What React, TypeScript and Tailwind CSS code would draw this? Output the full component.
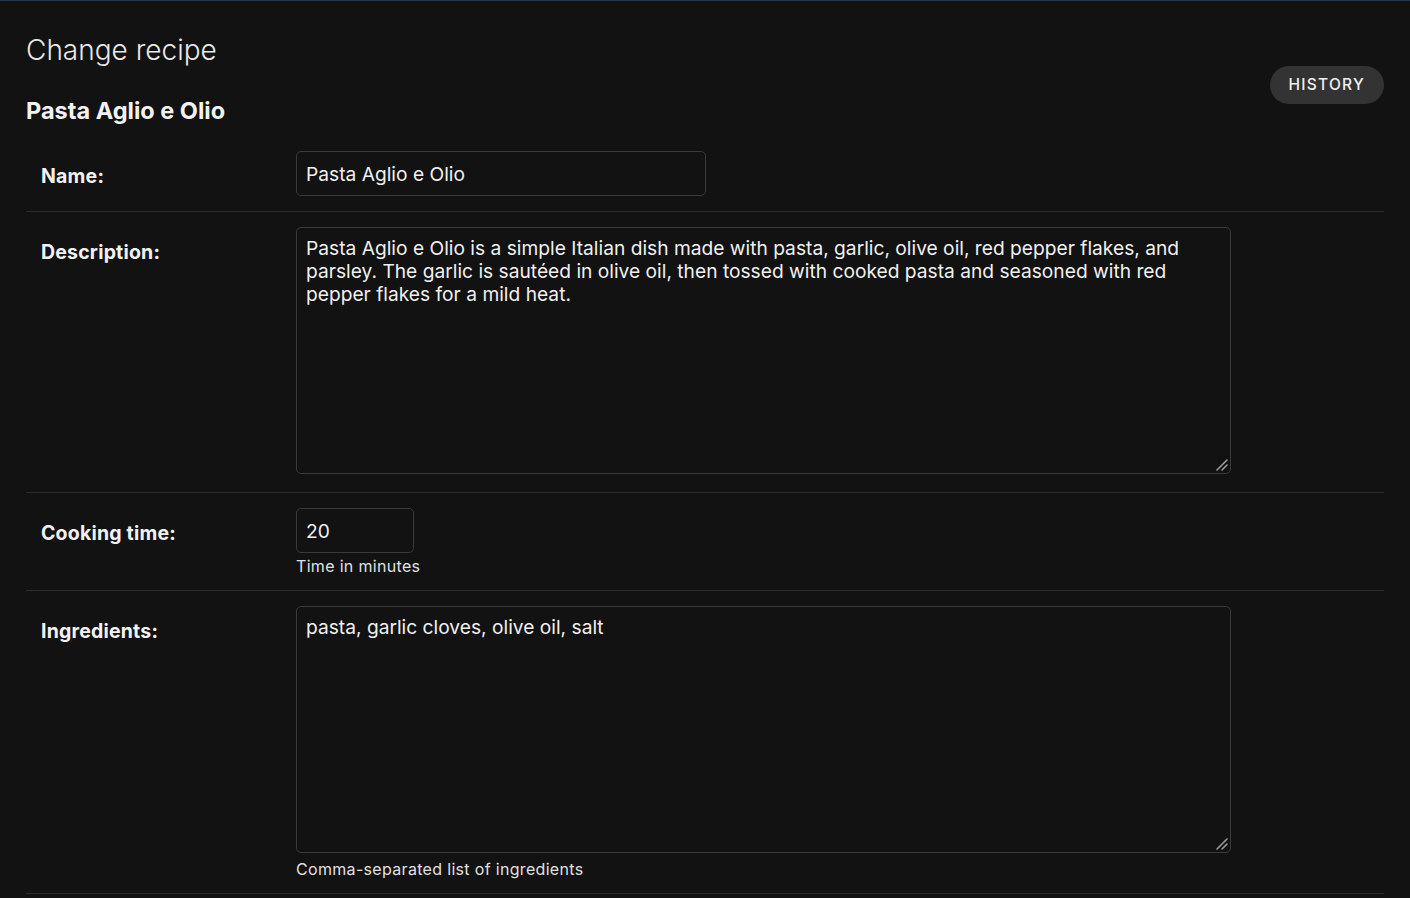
const fieldInput =
  "rounded-[5px] border border-[#3a3a3a] bg-[#121212] px-[9px] text-[19.2px] text-[#f0f0f0] outline-none";

function Row({
  label,
  children,
  className = "",
}: {
  label: string;
  children: React.ReactNode;
  className?: string;
}) {
  return (
    <div className={`flex border-b border-[#2c2c2c] px-[15px] ${className}`}>
      <label className="w-[255px] shrink-0 pt-[12px] text-[19.5px] font-bold leading-[26px] tracking-[0.01em] text-[#f2f2f2]">
        {label}
      </label>
      <div className="flex flex-col">{children}</div>
    </div>
  );
}

function Grip() {
  return (
    <svg
      className="pointer-events-none absolute bottom-[3px] right-[3px]"
      width="12"
      height="12"
      viewBox="0 0 12 12"
    >
      <path d="M1 11 L11 1 M6 11 L11 6" stroke="#9a9a9a" strokeWidth="1.6" strokeLinecap="round" />
    </svg>
  );
}

function TextArea({ value }: { value: string }) {
  return (
    <div className="relative h-[247px] w-[935px]">
      <textarea
        className={`${fieldInput} block h-full w-full resize-none py-[9px] leading-[23px]`}
        defaultValue={value}
        readOnly
      />
      <Grip />
    </div>
  );
}

export default function App() {
  return (
    <div className="min-h-[898px] border-t border-[#1e3a4a] bg-[#121212] font-['Inter',sans-serif] text-[#f0f0f0]">
      <div className="px-[26px]">
        <div className="flex items-start justify-between">
          <div>
            <h1 className="mt-[30px] text-[28px] font-light leading-[38px] text-[#e8e8e8]">
              Change recipe
            </h1>
            <h2 className="mt-[27px] text-[23.5px] font-bold leading-[30px] text-[#f2f2f2]">
              Pasta Aglio e Olio
            </h2>
          </div>
          <button className="mt-[65px] h-[38px] rounded-full bg-[#333333] px-[19px] text-[15.5px] font-medium uppercase tracking-[0.08em] text-[#f0f0f0]">
            History
          </button>
        </div>

        <div className="mt-[10px]">
          <Row label="Name:" className="pb-[15px] pt-[15px]">
            <input
              className={`${fieldInput} h-[45px] w-[410px]`}
              defaultValue="Pasta Aglio e Olio"
              readOnly
            />
          </Row>
          <Row label="Description:" className="pb-[18px] pt-[15px]">
            <TextArea value="Pasta Aglio e Olio is a simple Italian dish made with pasta, garlic, olive oil, red pepper flakes, and parsley. The garlic is sautéed in olive oil, then tossed with cooked pasta and seasoned with red pepper flakes for a mild heat." />
          </Row>
          <Row label="Cooking time:" className="pb-[14px] pt-[15px]">
            <input
              className={`${fieldInput} h-[45px] w-[118px]`}
              defaultValue="20"
              readOnly
            />
            <p className="mt-[3px] text-[16px] leading-[20px] tracking-[0.02em] text-[#e0e0e0]">
              Time in minutes
            </p>
          </Row>
          <Row label="Ingredients:" className="pb-[14px] pt-[15px]">
            <TextArea value="pasta, garlic cloves, olive oil, salt" />
            <p className="mt-[6px] text-[16px] leading-[20px] tracking-[0.02em] text-[#e0e0e0]">
              Comma-separated list of ingredients
            </p>
          </Row>
        </div>
      </div>
    </div>
  );
}
